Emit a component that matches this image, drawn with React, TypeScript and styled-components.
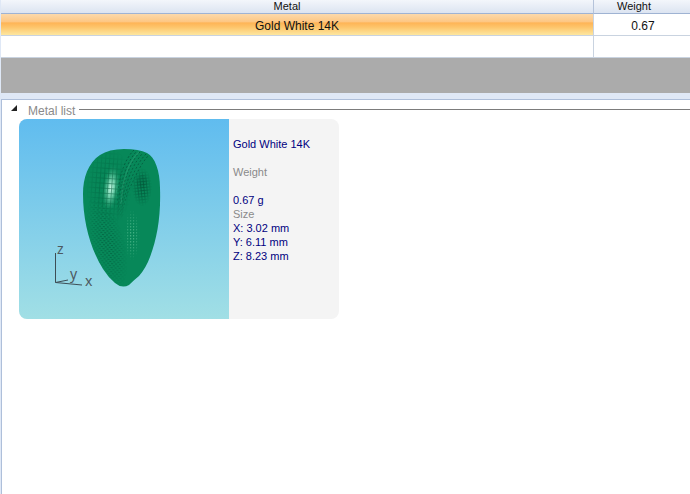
import React, { useState } from "react";
import styled, { createGlobalStyle } from "styled-components";

const GlobalStyle = createGlobalStyle`
  html, body, #root { height: 100%; }
  body {
    margin: 0;
    background: #dfe8f6;
    font-family: "Liberation Sans", Arial, sans-serif;
    overflow: hidden;
  }
  * { box-sizing: border-box; }
`;

const Page = styled.main`
  display: flex;
  flex-direction: column;
  min-height: 100%;
  padding-left: 1px;
`;

const GridArea = styled.section`
  height: 93px;
  background: #ababab;
`;

const Table = styled.table`
  width: 100%;
  border-collapse: separate;
  border-spacing: 0;
  table-layout: fixed;
`;

const MetalCol = styled.col``;
const WeightCol = styled.col`
  width: 96px;
`;

const HeadCell = styled.th`
  height: 14px;
  padding: 0 20px 0 0;
  border-right: 1px solid #b5c3da;
  border-bottom: 1px solid #9fb3d3;
  background: linear-gradient(#f3f6fb, #dce4f1);
  font-size: 11px;
  font-weight: 400;
  line-height: 13px;
  color: #111;
  &:last-child { border-right: 0; padding-right: 16px; }
`;

const Cell = styled.td<{ $selected?: boolean }>`
  height: 22px;
  padding: 3px 0 0;
  border-right: 1px solid #c9d3e0;
  border-bottom: 1px solid #c9d3e0;
  background: ${(p) =>
    p.$selected
      ? "linear-gradient(#fcd9ab 0%, #fdc682 38%, #feb456 42%, #fdc46a 62%, #fde7a0 100%)"
      : "#fff"};
  font-size: 12px;
  line-height: 18px;
  text-align: center;
  color: #111;
  &:last-child { border-right: 0; padding-left: 2px; }
`;

const Panel = styled.section`
  flex: 1;
  margin-top: 6px;
  border-top: 1px solid #aebfda;
  border-left: 1px solid #aebfda;
  background: #fff;
`;

const GroupHeader = styled.h2`
  display: flex;
  align-items: center;
  height: 19px;
  margin: 0;
  font-size: 12px;
  font-weight: 400;
`;

const GroupToggle = styled.button`
  display: flex;
  align-items: center;
  gap: 11px;
  padding: 3px 4px 0 9px;
  border: 0;
  background: none;
  font: inherit;
  line-height: 16px;
  color: #8a8a8a;
  white-space: nowrap;
`;

const Arrow = styled.svg`
  width: 6px;
  height: 6px;
  margin-bottom: 6px;
`;

const Rule = styled.span`
  flex: 1;
  height: 1px;
  background: #7c7c7c;
`;

const Card = styled.article`
  display: flex;
  width: 320px;
  max-width: calc(100% - 17px);
  margin-left: 17px;
  border-radius: 8px;
  overflow: hidden;
  background: #f4f4f4;
`;

const Preview = styled.svg`
  flex: none;
  display: block;
  width: 210px;
  height: 200px;
`;

const Details = styled.div`
  padding: 18px 4px 0;
  font-size: 11px;
  line-height: 14px;
  color: #000080;
`;

const Name = styled.h3`
  margin: 0 0 14px;
  font: inherit;
  white-space: nowrap;
`;

const Specs = styled.dl`
  margin: 0;
`;

const Term = styled.dt<{ $spaced?: boolean }>`
  margin-bottom: ${(p) => (p.$spaced ? "14px" : "0")};
  color: #8a8a8a;
`;

const Value = styled.dd`
  margin: 0;
`;

const AxisLabel = styled.text`
  font-family: "Noto Sans", sans-serif;
  font-size: 14px;
  fill: #4d5960;
`;

const OUTLINE =
  "M83 194C83 178 88 163 100 155Q109 149 124 149Q139 149 147 153C155 157 160 171 160 188C161 217 157 238 150 257Q146 268 139 276Q134 280 129 285Q122 289 115 283Q108 277 103 269C90 248 83 221 83 194Z";

const seams = Array.from({ length: 6 }, (_, i) => {
  const d = i * 3;
  return `M${134 + d} ${150 + i}C${126 + d} ${158 + i} ${120 + d} ${172 + i} ${118 + i * 2} 192Q${117 + i} 208 ${117 + i} 222`;
});

const RingPreview = () => (
  <Preview viewBox="19 119 210 200" role="img" aria-label="3D model of the ring">
    <defs>
      <linearGradient id="sky" x1="0" y1="0" x2="0" y2="1">
        <stop offset="0" stopColor="#60bcef" />
        <stop offset="1" stopColor="#a1dfe5" />
      </linearGradient>
      <radialGradient id="shine">
        <stop offset="0" stopColor="#d0fdec" />
        <stop offset="0.4" stopColor="#7fdcb8" stopOpacity="0.8" />
        <stop offset="1" stopColor="#078859" stopOpacity="0" />
      </radialGradient>
      <radialGradient id="fade">
        <stop offset="0" stopColor="#fff" />
        <stop offset="0.5" stopColor="#fff" stopOpacity="0.65" />
        <stop offset="1" stopColor="#fff" stopOpacity="0" />
      </radialGradient>
      <linearGradient id="seamInk" gradientUnits="userSpaceOnUse" x1="0" y1="150" x2="0" y2="222">
        <stop offset="0" stopColor="#034e34" stopOpacity="0.75" />
        <stop offset="0.6" stopColor="#034e34" stopOpacity="0.5" />
        <stop offset="1" stopColor="#034e34" stopOpacity="0" />
      </linearGradient>
      <pattern id="mesh" width="4" height="5" patternUnits="userSpaceOnUse" patternTransform="rotate(4)">
        <path d="M0 .5H4M.5 0V5" stroke="#03613f" strokeWidth="0.7" />
      </pattern>
      <pattern id="fineMesh" width="3" height="3" patternUnits="userSpaceOnUse" patternTransform="rotate(-6)">
        <path d="M0 .5H3M.5 0V3" stroke="#034e34" strokeWidth="0.8" />
      </pattern>
      <pattern id="brickMesh" width="4" height="4" patternUnits="userSpaceOnUse" patternTransform="rotate(6)">
        <path d="M0 .5H2M2 2.5H4" stroke="#03563a" strokeWidth="0.9" />
      </pattern>
      <pattern id="lightMesh" width="3" height="3" patternUnits="userSpaceOnUse">
        <path d="M1 1H2.2V2.4H1Z" fill="#5cc296" />
      </pattern>
      <mask id="frontMask"><ellipse cx="109" cy="186" rx="23" ry="38" fill="url(#fade)" /></mask>
      <mask id="holeMask"><ellipse cx="142" cy="187" rx="10" ry="19" fill="url(#fade)" /></mask>
      <mask id="lowerMask"><ellipse cx="107" cy="241" rx="17" ry="48" transform="rotate(-15 107 241)" fill="url(#fade)" /></mask>
      <mask id="innerMask"><ellipse cx="132" cy="235" rx="8" ry="26" fill="url(#fade)" /></mask>
      <clipPath id="ringClip"><path d={OUTLINE} /></clipPath>
    </defs>
    <rect x="19" y="119" width="210" height="200" fill="url(#sky)" />
    <path d={OUTLINE} fill="#078859" />
    <g clipPath="url(#ringClip)">
      <ellipse cx="111" cy="188" rx="9" ry="24" transform="rotate(7 111 188)" fill="url(#shine)" />
      <rect x="83" y="147" width="50" height="78" fill="url(#mesh)" mask="url(#frontMask)" opacity="0.85" />
      <rect x="83" y="190" width="48" height="98" fill="url(#brickMesh)" mask="url(#lowerMask)" opacity="0.8" />
      <path d="M139 152C128 163 123 177 121 204" fill="none" stroke="#2fa477" strokeWidth="1.5" opacity="0.45" />
      {seams.map((d, i) => (
        <path key={i} d={d} fill="none" stroke="url(#seamInk)" strokeWidth="1" strokeDasharray="2 2" strokeDashoffset={i % 2 ? 2 : 0} />
      ))}
      <rect x="130" y="168" width="25" height="40" fill="url(#fineMesh)" mask="url(#holeMask)" opacity="0.9" />
      <ellipse cx="142" cy="181" rx="5" ry="6" fill="#034e34" opacity="0.15" />
      <rect x="124" y="208" width="18" height="54" fill="url(#lightMesh)" mask="url(#innerMask)" opacity="0.8" />
    </g>
    <path d="M55.5 253V282.5L82 285M55.5 282.5L68 280" fill="none" stroke="#3d4d55" strokeWidth="1" />
    <AxisLabel x="57" y="254">z</AxisLabel>
    <AxisLabel x="70" y="279">y</AxisLabel>
    <AxisLabel x="85" y="286">x</AxisLabel>
  </Preview>
);

const rows = [
  { metal: "Gold White 14K", weight: "0.67", selected: true },
  { metal: "", weight: "", selected: false },
];

const sizes = ["X: 3.02 mm", "Y: 6.11 mm", "Z: 8.23 mm"];

export default function App() {
  const [open, setOpen] = useState(true);
  return (
    <>
      <GlobalStyle />
      <Page>
        <GridArea>
          <Table>
            <colgroup>
              <MetalCol />
              <WeightCol />
            </colgroup>
            <thead>
              <tr>
                <HeadCell scope="col">Metal</HeadCell>
                <HeadCell scope="col">Weight</HeadCell>
              </tr>
            </thead>
            <tbody>
              {rows.map((row, i) => (
                <tr key={i}>
                  <Cell $selected={row.selected}>{row.metal}</Cell>
                  <Cell>{row.weight}</Cell>
                </tr>
              ))}
            </tbody>
          </Table>
        </GridArea>
        <Panel>
          <GroupHeader>
            <GroupToggle type="button" aria-expanded={open} onClick={() => setOpen(!open)}>
              <Arrow viewBox="0 0 6 6" aria-hidden="true">
                <path d="M6 0V6H0Z" fill="#222" />
              </Arrow>
              Metal list
            </GroupToggle>
            <Rule />
          </GroupHeader>
          {open && (
            <Card>
              <RingPreview />
              <Details>
                <Name>Gold White 14K</Name>
                <Specs>
                  <Term $spaced>Weight</Term>
                  <Value>0.67 g</Value>
                  <Term>Size</Term>
                  {sizes.map((size) => (
                    <Value key={size}>{size}</Value>
                  ))}
                </Specs>
              </Details>
            </Card>
          )}
        </Panel>
      </Page>
    </>
  );
}
